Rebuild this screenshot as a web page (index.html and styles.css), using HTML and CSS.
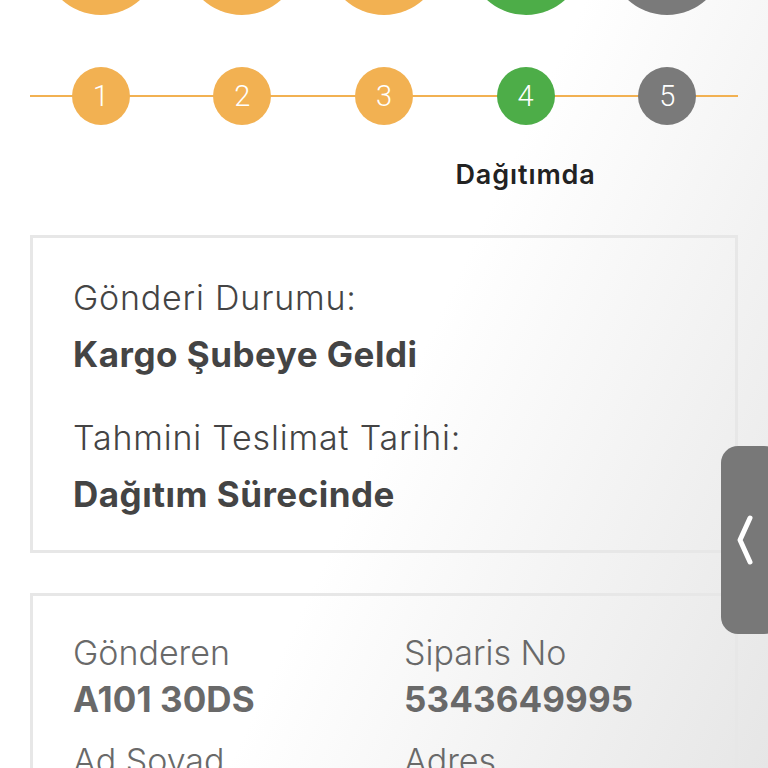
FILE: index.html
```html
<!DOCTYPE html>
<html lang="tr">
<head>
<meta charset="utf-8">
<title>Kargo Takip</title>
<link rel="stylesheet" href="styles.css">
</head>
<body>
<div class="page">
  <div class="big-row">
    <span class="big-dot orange"></span>
    <span class="big-dot orange"></span>
    <span class="big-dot orange"></span>
    <span class="big-dot green"></span>
    <span class="big-dot gray"></span>
  </div>

  <div class="steps">
    <div class="step"><span class="dot orange">1</span></div>
    <div class="step"><span class="dot orange">2</span></div>
    <div class="step"><span class="dot orange">3</span></div>
    <div class="step"><span class="dot green">4</span></div>
    <div class="step"><span class="dot gray">5</span></div>
  </div>

  <div class="step-labels">
    <span></span><span></span><span></span>
    <span class="step-label">Dağıtımda</span>
    <span></span>
  </div>

  <section class="card status-card">
    <div class="field">
      <div class="label">Gönderi Durumu:</div>
      <div class="value">Kargo Şubeye Geldi</div>
    </div>
    <div class="field">
      <div class="label">Tahmini Teslimat Tarihi:</div>
      <div class="value">Dağıtım Sürecinde</div>
    </div>
  </section>

  <section class="card info-card">
    <div class="info-item">
      <div class="label">Gönderen</div>
      <div class="value">A101 30DS</div>
    </div>
    <div class="info-item">
      <div class="label">Siparis No</div>
      <div class="value">5343649995</div>
    </div>
    <div class="info-item">
      <div class="label">Ad Soyad</div>
      <div class="value">&nbsp;</div>
    </div>
    <div class="info-item">
      <div class="label">Adres</div>
      <div class="value">&nbsp;</div>
    </div>
  </section>
</div>

<button class="side-handle" aria-label="Aç">
  <svg width="20" height="52" viewBox="0 0 20 52"><path d="M15 4 L5 26 L15 48" fill="none" stroke="#fff" stroke-width="5" stroke-linecap="round" stroke-linejoin="round"/></svg>
</button>
</body>
</html>
```

FILE: styles.css
```css
html, body {
  margin: 0;
  padding: 0;
  height: 100%;
  overflow: hidden;
}
body {
  font-family: Inter, Roboto, "Liberation Sans", sans-serif;
  background: linear-gradient(115deg, #ffffff 0%, #ffffff 52%, #e6e6e6 100%);
}
.page {
  padding: 0 30px;
}
.big-row {
  display: grid;
  grid-template-columns: repeat(5, 1fr);
  justify-items: center;
  margin-top: -101px;
}
.big-dot {
  display: block;
  width: 116px;
  height: 116px;
  border-radius: 50%;
}
.orange { background: #f2b152; }
.green { background: #4dad48; }
.gray { background: #7a7a7a; }

.steps {
  position: relative;
  display: grid;
  grid-template-columns: repeat(5, 1fr);
  justify-items: center;
  margin-top: 52px;
}
.steps::before {
  content: "";
  position: absolute;
  left: 0;
  right: 0;
  top: 28px;
  height: 2px;
  background: #f2b152;
}
.step { position: relative; }
.dot {
  display: flex;
  align-items: center;
  justify-content: center;
  width: 58px;
  height: 58px;
  border-radius: 50%;
  color: #fff;
  font-family: Roboto, "Liberation Sans", sans-serif;
  font-size: 29px;
  font-weight: 300;
}
.step-labels {
  display: grid;
  grid-template-columns: repeat(5, 1fr);
  justify-items: center;
  margin-top: 33px;
}
.step-label {
  font-size: 27px;
  font-weight: 600;
  color: #222;
  line-height: 34px;
  white-space: nowrap;
  letter-spacing: 0.9px;
}

.card {
  border: 3px solid #e7e7e7;
  background: transparent;
}
.status-card {
  margin-top: 43px;
  padding: 38px 40px 34px;
  color: #444;
}
.field + .field { margin-top: 40px; }
.label {
  font-size: 34px;
  font-weight: 300;
  line-height: 44px;
  letter-spacing: 0.8px;
  white-space: nowrap;
}
.value {
  font-size: 35px;
  font-weight: 700;
  line-height: 44px;
  letter-spacing: 0.5px;
  white-space: nowrap;
}
.field .value { margin-top: 12px; }

.info-card {
  margin-top: 40px;
  padding: 35px 40px 20px;
  color: #696969;
  display: grid;
  grid-template-columns: 331px 1fr;
  row-gap: 18px;
}
.info-card .label { letter-spacing: 0; }
.info-card .value { letter-spacing: 0.1px; }
.info-item .value { margin-top: 2px; }

.side-handle {
  position: absolute;
  left: 721px;
  top: 446px;
  width: 60px;
  height: 188px;
  border: none;
  border-radius: 17px;
  background: #787878;
  padding: 0 0 0 14px;
  display: flex;
  align-items: center;
  justify-content: flex-start;
}
```
